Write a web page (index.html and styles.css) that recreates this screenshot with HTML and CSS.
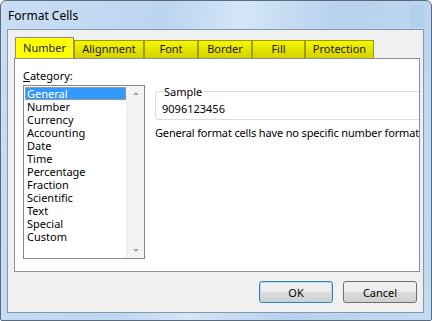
FILE: index.html
```html
<!DOCTYPE html>
<html lang="en">
<head>
    <meta charset="UTF-8">
    <title>Format Cells</title>
    <link rel="stylesheet" href="styles.css">
</head>
<body>
    <div class="window">
        <div class="titlebar">
            <span class="title">Format Cells</span>
            <span class="close-stub"></span>
        </div>
        <div class="client">
            <div class="tabs">
                <div class="tab active tab-number">Number</div>
                <div class="tab tab-alignment">Alignment</div>
                <div class="tab tab-font">Font</div>
                <div class="tab tab-border">Border</div>
                <div class="tab tab-fill">Fill</div>
                <div class="tab tab-protection">Protection</div>
            </div>
            <div class="panel">
                <div class="category">
                    <div class="label"><u>C</u>ategory:</div>
                    <div class="listbox">
                        <ul class="items">
                            <li class="selected">General</li>
                            <li>Number</li>
                            <li>Currency</li>
                            <li>Accounting</li>
                            <li>Date</li>
                            <li>Time</li>
                            <li>Percentage</li>
                            <li>Fraction</li>
                            <li>Scientific</li>
                            <li>Text</li>
                            <li>Special</li>
                            <li>Custom</li>
                        </ul>
                        <div class="scrollbar">
                            <span class="arrow up"></span>
                            <span class="arrow down"></span>
                        </div>
                    </div>
                </div>
                <div class="details">
                    <fieldset class="sample">
                        <legend>Sample</legend>
                        <div class="sample-value">9096123456</div>
                    </fieldset>
                    <p class="description">General format cells have no specific number format</p>
                </div>
            </div>
            <div class="buttons">
                <button class="btn default">OK</button>
                <button class="btn">Cancel</button>
            </div>
        </div>
    </div>
</body>
</html>
```

FILE: styles.css
```css
body {
    margin: 0;
    background: #ffffff;
    font-family: "Noto Sans", "Open Sans", sans-serif;
    font-size: 11px;
    color: #000000;
}
.window {
    width: 432px;
    height: 321px;
    box-sizing: border-box;
    border: 1px solid #5a6b80;
    border-radius: 6px 6px 2px 2px;
    background: linear-gradient(100deg, #c9def5 0%, #bcd5f0 35%, #d4e6f8 50%, #b7d1ee 70%, #c2d9f2 100%);
    padding: 0 7px 7px 6px;
    display: flex;
    flex-direction: column;
}
.titlebar {
    height: 28px;
    display: flex;
    align-items: center;
    justify-content: space-between;
}
.title {
    padding-left: 1px;
    font-size: 12px;
    color: #000000;
}
.close-stub {
    width: 14px;
    height: 22px;
    margin-top: 2px;
    background: #b3cfee;
}
.client {
    flex: 1;
    background: #f0f0f0;
    border: 1px solid #8499ae;
    padding: 7px 3px 0 6px;
    display: flex;
    flex-direction: column;
}
.tabs {
    display: flex;
    align-items: flex-end;
    height: 21px;
    padding-left: 1px;
}
.tab {
    box-sizing: border-box;
    height: 18px;
    line-height: 16px;
    text-align: center;
    color: #2a1600;
    background: linear-gradient(#f6f600, #d2d200);
    border: 1px solid #9c9c00;
    border-bottom: none;
}
.tab.active {
    height: 21px;
    line-height: 19px;
    background: #ffff00;
    border-color: #8c8e94;
    color: #222222;
}
.tab-number { width: 59px; }
.tab-alignment { width: 70px; }
.tab-font { width: 54px; }
.tab-border { width: 54px; }
.tab-fill { width: 53px; }
.tab-protection { width: 69px; }
.panel {
    height: 214px;
    box-sizing: border-box;
    background: #ffffff;
    border: 1px solid #8c8e94;
    display: flex;
    padding: 9px 0 0 8px;
    overflow: hidden;
}
.category {
    width: 122px;
    flex-shrink: 0;
}
.label {
    line-height: 15px;
    height: 17px;
}
.listbox {
    box-sizing: border-box;
    height: 174px;
    border: 1px solid #828790;
    display: flex;
}
.items {
    list-style: none;
    margin: 0;
    padding: 1px 0 0 1px;
    flex: 1;
}
.items li {
    height: 13px;
    line-height: 13px;
    padding-left: 2px;
}
.items li.selected {
    background: #3399ff;
    color: #ffffff;
    outline: 1px dotted #f0a040;
    outline-offset: -1px;
}
.scrollbar {
    width: 17px;
    background: #f4f4f4;
    border-left: 1px solid #ececec;
    display: flex;
    flex-direction: column;
    justify-content: space-between;
    align-items: center;
    padding: 6px 0;
}
.arrow {
    width: 0;
    height: 0;
    border-left: 3px solid transparent;
    border-right: 3px solid transparent;
}
.arrow.up {
    border-bottom: 3px solid #a8a8a8;
}
.arrow.down {
    border-top: 3px solid #a8a8a8;
}
.details {
    margin-left: 10px;
    padding-top: 17px;
    flex-shrink: 0;
}
.sample {
    width: 300px;
    margin: 0;
    padding: 4px 6px 4px;
    border: 1px solid #d5dfe5;
    border-radius: 3px;
}
.sample legend {
    padding: 0 1px;
    margin-left: 1px;
    line-height: 13px;
}
.sample-value {
    line-height: 13px;
}
.description {
    margin: 6px 0 0;
    line-height: 13px;
    white-space: nowrap;
    letter-spacing: -0.15px;
}
.buttons {
    display: flex;
    justify-content: flex-end;
    gap: 10px;
    padding: 9px 3px 0 0;
}
.btn {
    width: 74px;
    height: 22px;
    box-sizing: border-box;
    font-family: inherit;
    font-size: 11px;
    color: #000000;
    border: 1px solid #707070;
    border-radius: 3px;
    background: linear-gradient(#f2f2f2 0%, #ebebeb 48%, #dddddd 52%, #cfcfcf 100%);
    padding: 0;
}
.btn.default {
    border-color: #3c7fb1;
    box-shadow: inset 0 0 0 1px #a6dcf8;
}
```
